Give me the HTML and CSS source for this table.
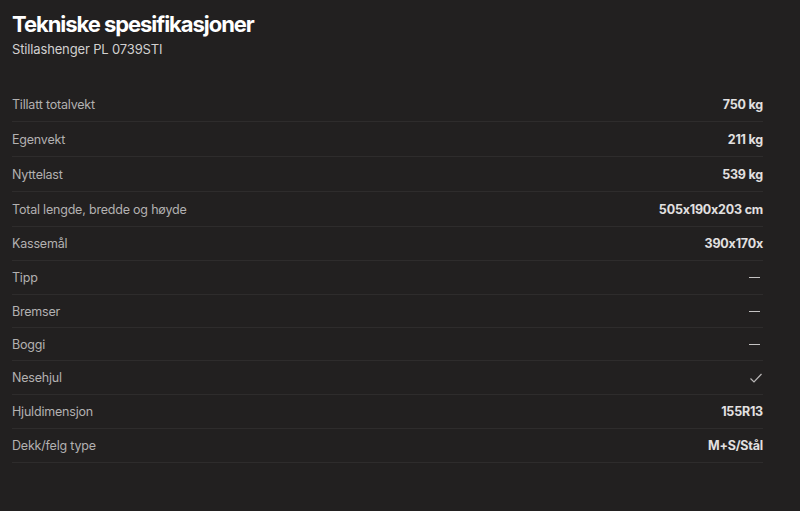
FILE: index.html
```html
<!DOCTYPE html>
<html lang="no">
<head>
    <meta charset="UTF-8">
    <meta name="viewport" content="width=device-width, initial-scale=1.0">
    <title>Tekniske spesifikasjoner</title>
    <link rel="stylesheet" href="styles.css">
</head>
<body>
    <section class="specs">
        <header class="specs-head">
            <h2>Tekniske spesifikasjoner</h2>
            <p>Stillashenger PL 0739STI</p>
        </header>

        <ul class="spec-list">
            <li><span class="label">Tillatt totalvekt</span><span class="value">750 kg</span></li>
            <li><span class="label">Egenvekt</span><span class="value">211 kg</span></li>
            <li><span class="label">Nyttelast</span><span class="value">539 kg</span></li>
            <li><span class="label">Total lengde, bredde og høyde</span><span class="value">505x190x203 cm</span></li>
            <li><span class="label">Kassemål</span><span class="value">390x170x</span></li>
            <li><span class="label">Tipp</span><span class="value"><span class="dash"></span></span></li>
            <li class="short"><span class="label">Bremser</span><span class="value"><span class="dash"></span></span></li>
            <li class="short"><span class="label">Boggi</span><span class="value"><span class="dash"></span></span></li>
            <li>
                <span class="label">Nesehjul</span>
                <span class="value">
                    <svg class="check" width="14" height="14" viewBox="0 0 14 14"><path d="M1.5 7.5 L5 11 L12.5 3" fill="none" stroke="#b8b6b6" stroke-width="1.2"/></svg>
                </span>
            </li>
            <li><span class="label">Hjuldimensjon</span><span class="value">155R13</span></li>
            <li><span class="label">Dekk/felg type</span><span class="value">M+S/Stål</span></li>
        </ul>
    </section>
</body>
</html>
```

FILE: styles.css
```css
body{
    margin: 0;
    background-color: #222020;
    font-family: Inter, "Noto Sans", Arial, sans-serif;
    font-feature-settings: "calt" 0;
    color: #e6e4e4;
}

.specs{
    padding: 11px 37px 0 12px;
}

.specs-head h2{
    margin: 0;
    font-size: 22px;
    font-weight: 700;
    letter-spacing: -1.05px;
    line-height: 26px;
    color: #ffffff;
}

.specs-head p{
    margin: 3px 0 0;
    font-size: 13px;
    letter-spacing: -0.15px;
    line-height: 18px;
    color: #d2d0d0;
}

.spec-list{
    list-style-type: none;
    margin: 29px 0 0;
    padding: 0;
}

.spec-list li{
    display: flex;
    justify-content: space-between;
    align-items: center;
    height: 33px;
    border-bottom: 1px solid #2e2c2c;
    font-size: 12.5px;
    letter-spacing: -0.2px;
}

.spec-list li:nth-child(-n+4){
    height: 34px;
}

.spec-list li.short{
    height: 32px;
}

.label{
    color: #b3b1b1;
}

.value{
    display: flex;
    align-items: center;
    font-weight: 700;
    color: #e2e0e0;
}

.dash{
    display: block;
    width: 11px;
    height: 1px;
    margin-right: 3px;
    background-color: #c4c2c2;
}

.check{
    display: block;
}
```
